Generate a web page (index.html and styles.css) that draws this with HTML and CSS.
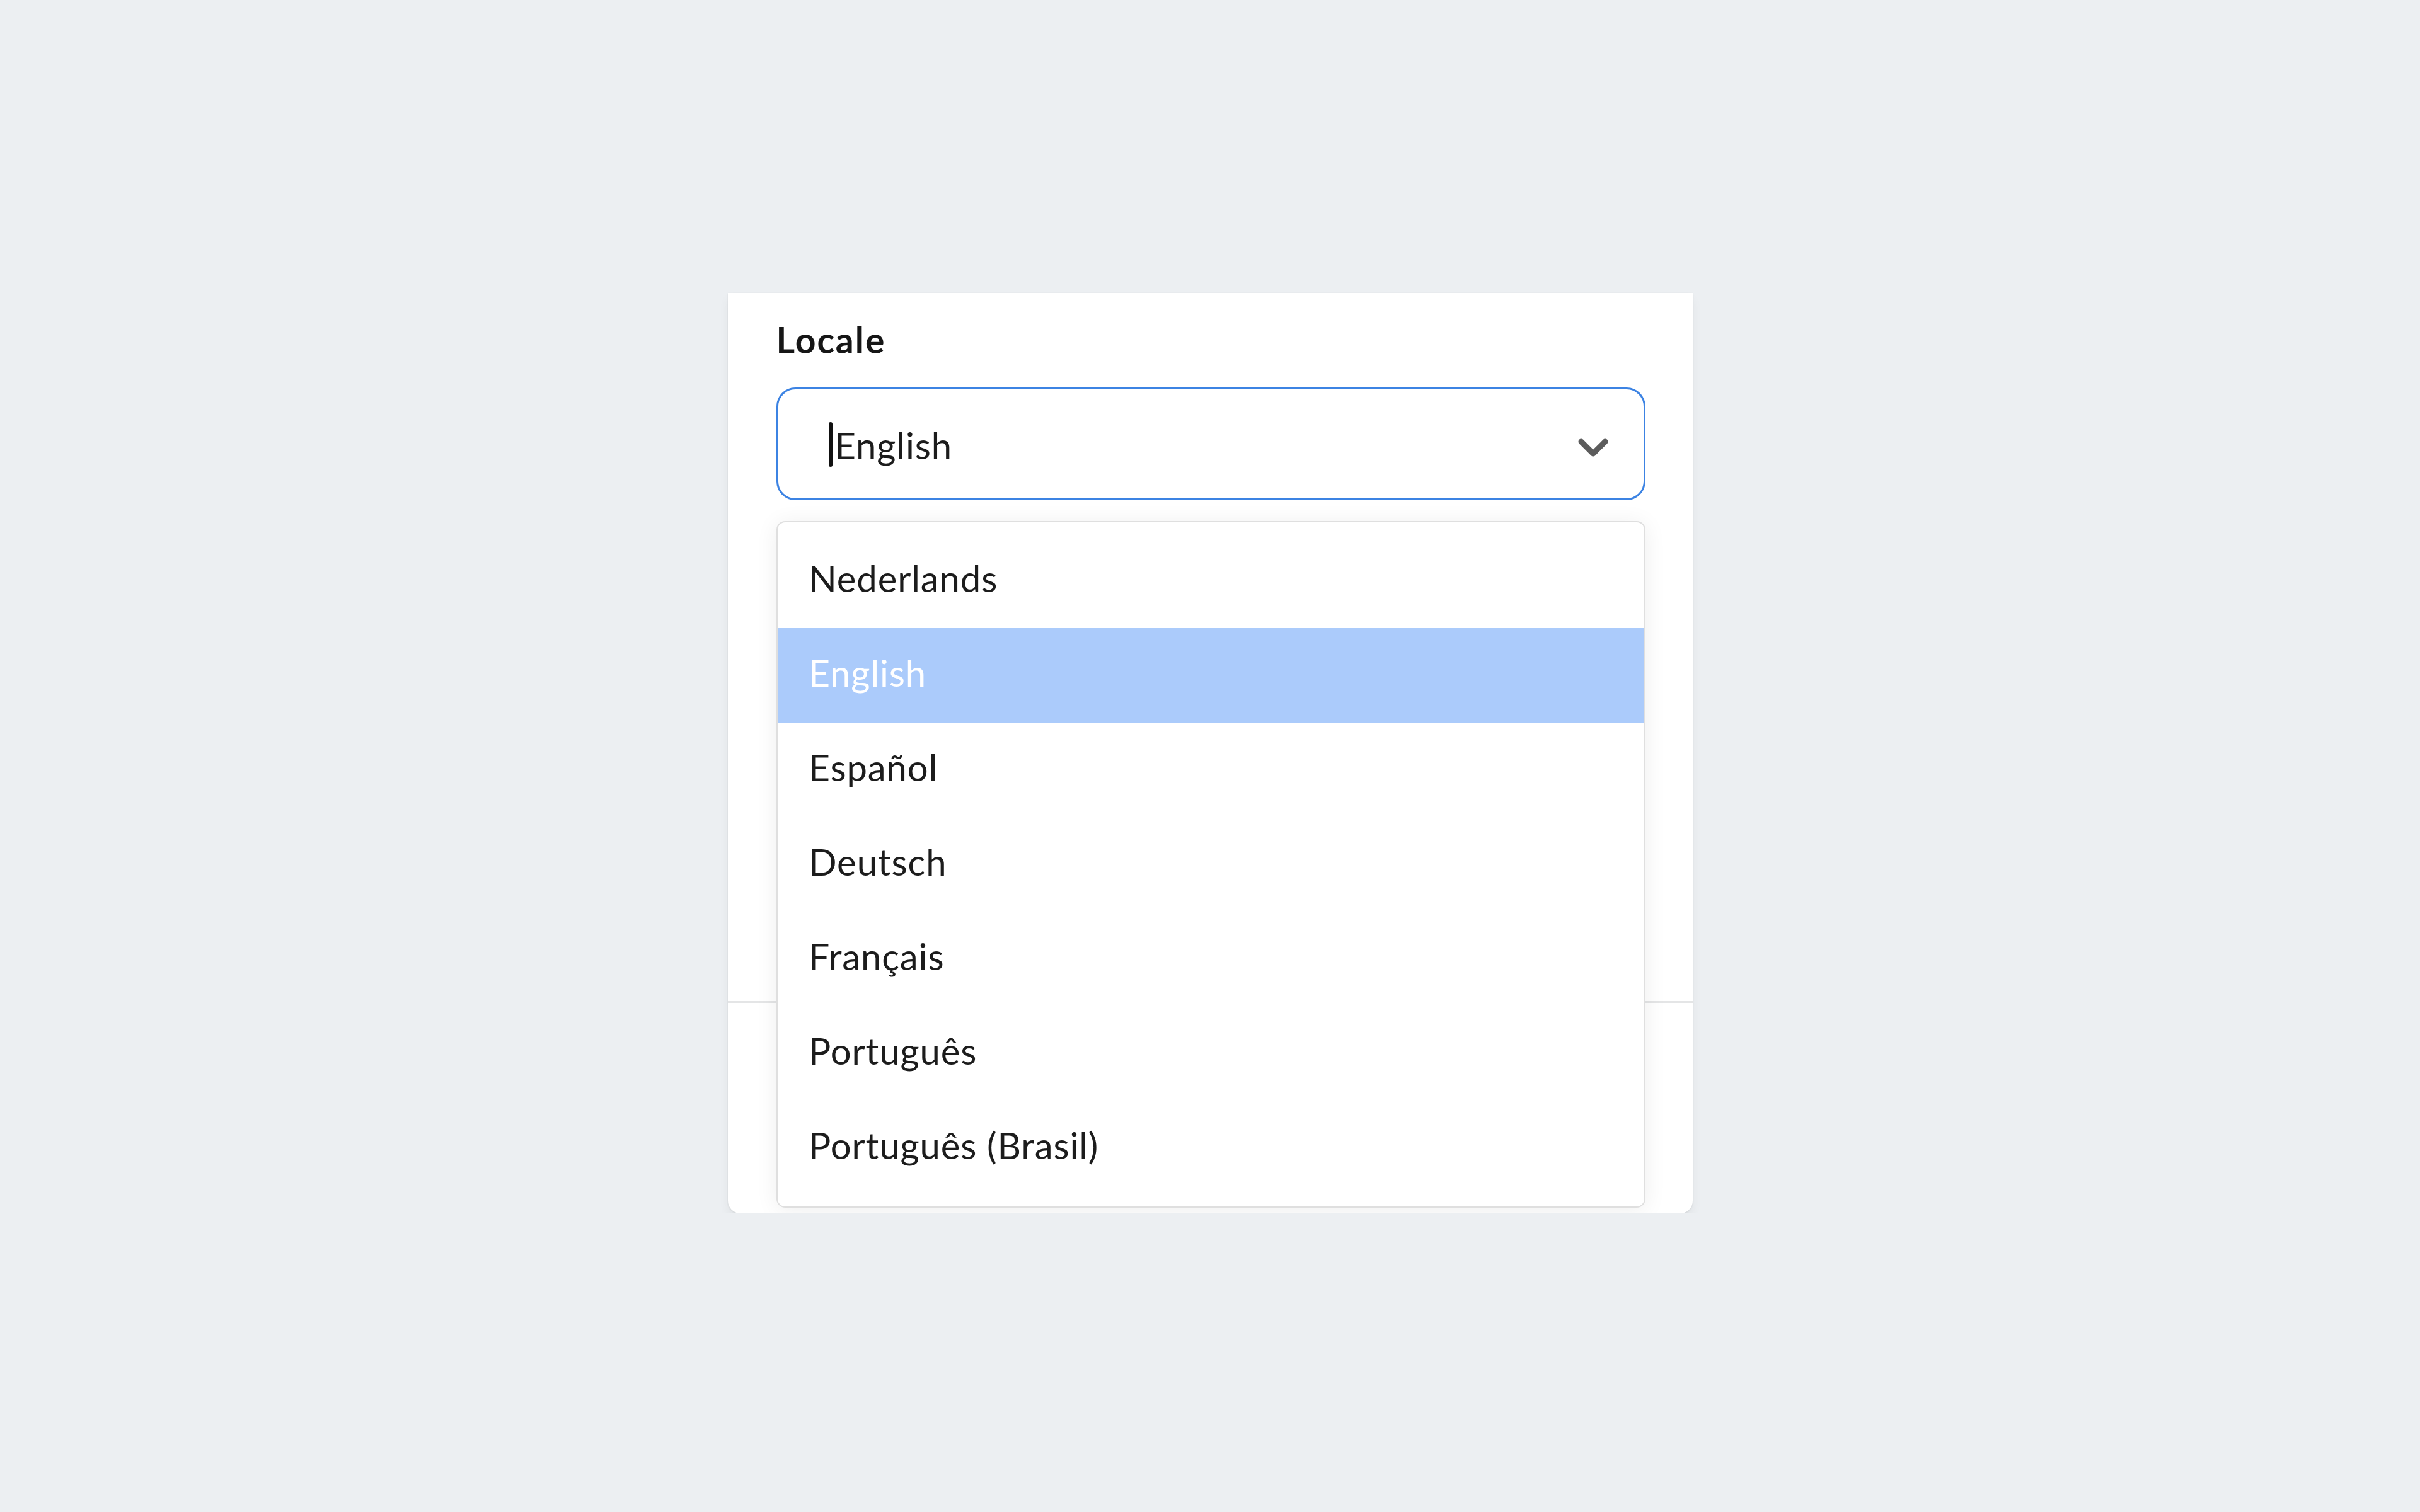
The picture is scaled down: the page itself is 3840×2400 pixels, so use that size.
FILE: index.html
```html
<!DOCTYPE html>
<html lang="en">
<head>
  <meta charset="UTF-8">
  <title>Locale</title>
  <link rel="stylesheet" href="styles.css">
</head>
<body>
  <div class="card">
    <div class="card-body">
      <label class="field-label">Locale</label>

      <div class="select">
        <div class="select-control">
          <span class="caret"></span>
          <span class="select-value">English</span>
          <svg class="chevron" width="50" height="34" viewBox="0 0 50 34">
            <path d="M6 7 L25 26 L44 7" fill="none" stroke="#5c5c5c" stroke-width="9" stroke-linecap="round" stroke-linejoin="round"/>
          </svg>
        </div>

        <ul class="menu">
          <li>Nederlands</li>
          <li class="active">English</li>
          <li>Español</li>
          <li>Deutsch</li>
          <li>Français</li>
          <li>Português</li>
          <li>Português (Brasil)</li>
        </ul>
      </div>
    </div>
    <div class="card-footer"></div>
  </div>
</body>
</html>
```

FILE: styles.css
```css
body {
  font-family: 'Lato', 'Open Sans', sans-serif;
  background: #eceff2;
  margin: 0;
  padding-top: 465px;
  color: #1c1c1c;
}

.card {
  width: 1531px;
  margin: 0 auto;
  background: #fff;
  border-radius: 0 0 20px 20px;
  box-shadow: 0 1px 3px rgba(0,0,0,0.09), 0 10px 16px rgba(0,0,0,0.05);
}

.card-body {
  box-sizing: border-box;
  height: 1127px;
  padding: 40px 75px 0 77px;
  border-bottom: 3px solid #e4e5e6;
}

.card-footer {
  height: 334px;
}

.field-label {
  display: block;
  font-size: 57px;
  font-weight: 700;
  line-height: 1.2;
  letter-spacing: 2px;
  color: #161616;
}

.select {
  position: relative;
  margin-top: 42px;
}

.select-control {
  box-sizing: border-box;
  height: 179px;
  display: flex;
  align-items: center;
  padding: 4px 55px 0 80px;
  border: 3px solid #3c83e3;
  border-radius: 30px;
  background: #fff;
}

.caret {
  width: 6px;
  height: 71px;
  margin-top: -2px;
  margin-right: 4px;
  border-radius: 3px;
  background: #111;
}

.select-value {
  flex: 1;
  font-size: 58px;
  line-height: 1.2;
  letter-spacing: 0.9px;
}

.chevron {
  margin-top: 8px;
}

.menu {
  position: absolute;
  top: calc(100% + 33px);
  left: 0;
  right: 0;
  margin: 0;
  padding: 18px 0;
  list-style: none;
  background: #fff;
  border: 2px solid #dfdfdf;
  border-radius: 14px;
  box-shadow: 0 4px 36px rgba(0,0,0,0.07);
}

.menu li {
  height: 150px;
  line-height: 142px;
  padding-left: 50px;
  font-size: 58px;
  letter-spacing: 0.9px;
}

.menu li.active {
  background: #abcbfb;
  color: #fff;
}
```
